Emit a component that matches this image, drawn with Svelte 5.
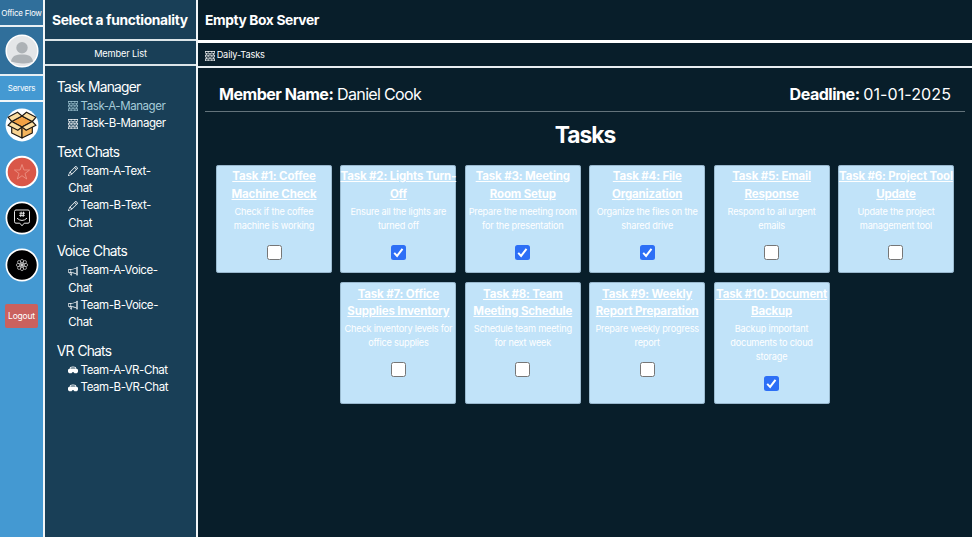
<script>
  const groups = [
    { title: 'Task Manager', icon: 'bricks', items: ['Task-A-Manager', 'Task-B-Manager'] },
    { title: 'Text Chats', icon: 'pencil', items: ['Team-A-Text-Chat', 'Team-B-Text-Chat'] },
    { title: 'Voice Chats', icon: 'megaphone', items: ['Team-A-Voice-Chat', 'Team-B-Voice-Chat'] },
    { title: 'VR Chats', icon: 'vr', items: ['Team-A-VR-Chat', 'Team-B-VR-Chat'] }
  ];
  const active = 'Task-A-Manager';
  const tasks = [
    ['Coffee Machine Check', 'Check if the coffee machine is working', false],
    ['Lights Turn-Off', 'Ensure all the lights are turned off', true],
    ['Meeting Room Setup', 'Prepare the meeting room for the presentation', true],
    ['File Organization', 'Organize the files on the shared drive', true],
    ['Email Response', 'Respond to all urgent emails', false],
    ['Project Tool Update', 'Update the project management tool', false],
    ['Office Supplies Inventory', 'Check inventory levels for office supplies', false],
    ['Team Meeting Schedule', 'Schedule team meeting for next week', false],
    ['Weekly Report Preparation', 'Prepare weekly progress report', false],
    ['Document Backup', 'Backup important documents to cloud storage', true]
  ];
  const petals = [0, 45, 90, 135, 180, 225, 270, 315];
</script>

{#snippet icon(name)}
  <svg class="icon" viewBox="0 0 16 16" fill="currentColor">
    {#if name === 'bricks'}
      <path fill-rule="evenodd" d="M0 .5A.5.5 0 0 1 .5 0h15a.5.5 0 0 1 .5.5v3a.5.5 0 0 1-.5.5H14v2h1.500a.5.5 0 0 1 .5.5v3a.5.5 0 0 1-.5.5H14v2h1.500a.5.5 0 0 1 .5.5v3a.5.5 0 0 1-.5.5H.5a.5.5 0 0 1-.5-.5v-3a.5.5 0 0 1 .5-.5H2v-2H.5a.5.5 0 0 1-.5-.5v-3A.5.5 0 0 1 .5 6H2V4H.5a.5.5 0 0 1-.5-.5zM3 4v2h4.500V4zm5.500 0v2H13V4zM3 10v2h4.500v-2zm5.500 0v2H13v-2zM1 1v2h3.500V1zm4.500 0v2h5V1zm6 0v2H15V1zM1 7v2h3.500V7zm4.500 0v2h5V7zm6 0v2H15V7zM1 13v2h3.500v-2zm4.500 0v2h5v-2zm6 0v2H15v-2z" />
    {:else if name === 'pencil'}
      <path d="M12.146.146a.5.5 0 0 1 .708 0l3 3a.5.5 0 0 1 0 .708l-10 10a.5.5 0 0 1-.168.11l-5 2a.5.5 0 0 1-.65-.65l2-5a.5.5 0 0 1 .11-.168zM11.207 2.500 13.500 4.793 14.793 3.500 12.500 1.207zm1.586 3L10.500 3.207 4 9.707V10h.5a.5.5 0 0 1 .5.5v.5h.5a.5.5 0 0 1 .5.5v.5h.293zm-9.761 5.175-.106.106-1.528 3.821 3.821-1.528.106-.106A.5.5 0 0 1 5 12.500V12h-.5a.5.5 0 0 1-.5-.5V11h-.5a.5.5 0 0 1-.468-.325" />
    {:else if name === 'megaphone'}
      <path d="M13 2.500a1.500 1.500 0 0 1 3 0v11a1.500 1.500 0 0 1-3 0v-.214c-2.162-1.241-4.490-1.843-6.912-2.083l.405 2.712A1 1 0 0 1 5.510 15.100h-.548a1 1 0 0 1-.916-.599l-1.850-3.490-.202-.003A2.014 2.014 0 0 1 0 9V7a2.020 2.020 0 0 1 1.992-2.013 75 75 0 0 0 2.483-.075c3.043-.154 6.148-.849 8.525-2.199zm1 0v11a.5.5 0 0 0 1 0v-11a.5.5 0 0 0-1 0m-1 1.350c-2.344 1.205-5.209 1.842-8 2.033v4.233q.270.015.537.036c2.568.189 5.093.744 7.463 1.993zm-9 6.215v-4.130a95 95 0 0 1-1.992.052A1.020 1.020 0 0 0 1 7v2c0 .55.448 1.002 1.006 1.009A61 61 0 0 1 4 10.065m-.657.975 1.609 3.037.010.024h.548l-.002-.014-.443-2.966a68 68 0 0 0-1.722-.082z" />
    {:else}
      <path d="M8 2.500C3.800 2.500 3 3.600 2.600 5.800 1 5.900 0 6.700 0 8v2.300C0 12 1.500 13.300 3.500 13.300c1.800 0 2.700-.8 3.400-1.500.6-.6 1.600-.6 2.200 0 .7.700 1.600 1.500 3.400 1.500 2 0 3.500-1.300 3.500-3V8c0-1.300-1-2.100-2.600-2.200C13 3.600 12.200 2.500 8 2.500M3.900 5.600c.3-1.200 1-1.700 4.100-1.700s3.800.5 4.100 1.700z" />
    {/if}
  </svg>
{/snippet}

<div class="app">
  <nav class="rail">
    <div class="brand">Office Flow</div>
    <div class="profile">
      <svg viewBox="0 0 34 34"><circle cx="17" cy="17" r="15.800" fill="#e4e6e8" stroke="#fff" stroke-width="1.500" /><circle cx="17" cy="13.700" r="5.700" fill="#adb2b6" /><path d="M6 27.500C7 21.700 11 20.500 17 20.500s10 1.200 11 7Q23.500 30 17 29.500T6 27.500Z" fill="#adb2b6" /></svg>
    </div>
    <div class="servers-label">Servers</div>
    <div class="servers">
      <svg viewBox="0 0 34 34"><circle cx="17" cy="17" r="16.400" fill="#fff" />
        <g stroke="#1d1712" stroke-width="1.150" stroke-linejoin="round">
          <path d="M6.700 14v11L17 30V19Z" fill="#fad391" /><path d="M27.300 14v11L17 30V19Z" fill="#f5b45c" />
          <path d="M6.700 13.500 17 8l10.300 5.500L17 19Z" fill="#f2a144" />
          <path d="M6.700 13.500 3 9.200l9.500-5L17 8Z" fill="#fbdc9f" /><path d="M27.300 13.500 31 9.200l-9.500-5L17 8Z" fill="#fbdc9f" />
          <path d="M6.700 13.500 3 17.300l9.800 5L17 19Z" fill="#fbdc9f" /><path d="m27.300 13.500 3.700 3.800-9.800 5L17 19Z" fill="#fbdc9f" />
        </g>
      </svg>
      <svg viewBox="0 0 34 34"><circle cx="17" cy="17" r="15.300" fill="#d95748" stroke="#fff" stroke-width="2" /><path d="m17 9.500 1.900 5.500h5.700L20 18.500l1.700 5.500-4.700-3.300-4.700 3.300 1.700-5.500L9.400 15h5.700Z" fill="none" stroke="#f0a294" stroke-width=".7" /></svg>
      <svg viewBox="0 0 34 34"><circle cx="17" cy="17" r="15.600" fill="#000" stroke="#fff" stroke-width="1.700" /><g fill="none" stroke="#e8e8e8" stroke-width="1"><path d="M11 9h12q1.500 0 1.500 1.500v10.200q0 1.500-1.500 1.500h-3.800L17 24.800l-2.200-2.600H11q-1.500 0-1.500-1.500V10.500Q9.500 9 11 9Z" /><path d="M12 17.200q5 4.500 10 0M16.200 10.700l-.5 5.200M18.600 10.700l-.5 5.200M14.400 12.200h5.500M14.200 14.400h5.500" /></g></svg>
      <svg viewBox="0 0 34 34"><circle cx="17" cy="17" r="15.600" fill="#000" stroke="#fff" stroke-width="1.700" /><g fill="none" stroke="#ddd" stroke-width=".65">{#each petals as angle}<ellipse cx="17" cy="13.900" rx="1.600" ry="2.700" transform="rotate({angle} 17 17)" />{/each}</g></svg>
    </div>
    <button class="logout">Logout</button>
  </nav>

  <aside class="menu">
    <h2>Select a functionality</h2>
    <div class="members">Member List</div>
    <div class="groups">
      {#each groups as g}
        <section>
          <h3>{g.title}</h3>
          {#each g.items as item}
            <div class="item" class:active={item === active}>{@render icon(g.icon)} {item}</div>
          {/each}
        </section>
      {/each}
    </div>
  </aside>

  <main>
    <h2>Empty Box Server</h2>
    <div class="channel">{@render icon('bricks')} <span>Daily-Tasks</span></div>
    <div class="content">
      <div class="info">
        <span class="member"><b>Member Name:</b> Daniel Cook</span>
        <span class="deadline"><b>Deadline:</b> 01-01-2025</span>
      </div>
      <h1>Tasks</h1>
      <div class="cards">
        {#each tasks as [name, text, done], i}
          <article>
            <h4>Task #{i + 1}: {name}</h4>
            <p>{text}</p>
            <span class="check" class:done>
              {#if done}<svg viewBox="0 0 15 15"><path d="m3.200 7.900 2.900 3L11.500 3.800" fill="none" stroke="#fff" stroke-width="2" /></svg>{/if}
            </span>
          </article>
        {/each}
      </div>
    </div>
  </main>
</div>

<style>
  :global(body) { margin: 0; }
  .app, .app * { box-sizing: border-box; }
  .app { display: flex; width: 972px; height: 537px; overflow: hidden; background: #081e2a; color: #fff; font-family: Inter, "Liberation Sans", sans-serif; font-size: 11.500px; line-height: 17.300px; }
  h1, h2, h3, h4, p { margin: 0; }
  .rail { flex: 0 0 45px; border-right: 2px solid #f2f6f8; background: #4499d2; display: flex; flex-direction: column; font-size: 8px; letter-spacing: -.24px; text-align: center; white-space: nowrap; }
  .brand { height: 27px; background: #306f9b; border-bottom: 2px solid #e8f0f5; line-height: 26px; }
  .profile { height: 49px; background: #306f9b; border-bottom: 2px solid #e8f0f5; display: flex; justify-content: center; align-items: center; }
  .profile svg, .servers svg { width: 34px; height: 34px; flex: none; display: block; }
  .servers-label { height: 26px; line-height: 25px; border-bottom: 2px solid #f2f6f8; }
  .servers { display: flex; flex-direction: column; align-items: center; gap: 12.500px; padding-top: 6.300px; }
  .logout { width: 33px; height: 24px; margin: 22px auto 0 5px; padding: 0; border: 0; border-radius: 2px; background: #ca615e; color: #fff; font: 8.500px Inter, sans-serif; letter-spacing: -.2px; }
  .menu { flex: 0 0 153px; background: #193f57; border-right: 2px solid #f2f6f8; }
  h2 { font-size: 13.800px; font-weight: 700; letter-spacing: -.32px; white-space: nowrap; }
  .menu h2 { height: 41px; line-height: 41px; padding-left: 7px; border-bottom: 2px solid #dce5e9; }
  .members { height: 25px; line-height: 25px; border-bottom: 2px solid #dce5e9; text-align: center; font-size: 9.200px; letter-spacing: -.13px; }
  .groups { padding: 11.700px 24px 0 11.800px; }
  section { margin-bottom: 10px; }
  h3 { font-size: 13.800px; line-height: 19px; margin-bottom: 1.300px; font-weight: 400; letter-spacing: -.76px; word-spacing: .6px; }
  .item { padding-left: 11.500px; letter-spacing: -.43px; }
  .icon { width: 1em; height: 1em; display: inline-block; }
  .item .icon { width: 10px; height: 10px; vertical-align: -1.500px; margin-right: -.5px; }
  .active { color: #a5cbd8; }
  main { flex: 1; min-width: 0; }
  main h2 { height: 43px; line-height: 41px; padding-left: 7px; border-bottom: 3px solid #fff; letter-spacing: -.38px; }
  .channel { height: 25px; padding-left: 7px; line-height: 24px; border-bottom: 2px solid #e7edf0; font-size: 9.200px; letter-spacing: -.15px; }
  .channel .icon { width: 10px; height: 10px; vertical-align: -2.500px; margin-right: -.8px; }
  .content { padding: 8.500px 7px 0; }
  .info { height: 35px; display: flex; justify-content: space-between; padding: 0 14px; line-height: 35px; border-bottom: 1px solid #63737b; font-size: 16.100px; letter-spacing: -.7px; }
  .info b { letter-spacing: -.53px; }
  .deadline { letter-spacing: .06px; }
  .deadline b { letter-spacing: -.5px; margin-right: -1px; }
  h1 { margin-top: 9px; text-align: center; font-size: 22.800px; line-height: 27px; font-weight: 700; letter-spacing: -1px; }
  .cards { display: flex; flex-wrap: wrap; justify-content: center; gap: 8.700px 8.400px; margin-top: 17px; }
  article { width: 116px; min-height: 108.600px; padding: 3.800px 0 13.200px; box-shadow: inset 0 0 0 .7px #8cabc0; border-radius: 3px; background: #c1e3f9; text-align: center; display: flex; flex-direction: column; align-items: center; }
  h4 { margin: 0 -3px; font-size: 11.500px; font-weight: 700; line-height: 17.300px; text-decoration: underline; letter-spacing: -.17px; }
  p { font-size: 9.200px; line-height: 14px; padding: 0 3px; margin: 2px 0 12px; letter-spacing: -.2px; }
  .check { width: 15px; height: 15px; flex: none; border: 1px solid #767676; border-radius: 2.500px; background: #fff; }
  .check.done { background: #2d6ff6; border: 0; }
  .check svg { display: block; width: 15px; height: 15px; }
</style>
